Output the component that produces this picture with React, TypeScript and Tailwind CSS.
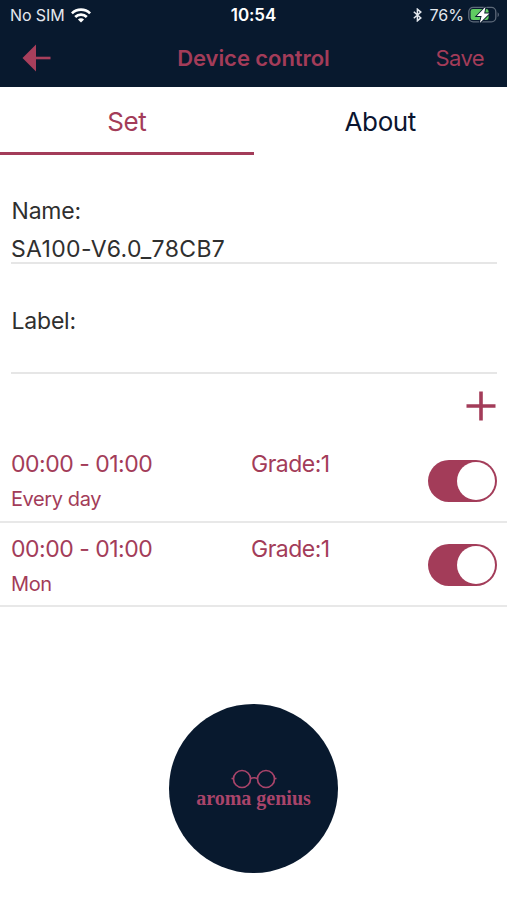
import React, { useState } from "react";

interface Timer {
    id: number;
    time: string;
    grade: number;
    days: string;
}

const timers: Timer[] = [
    { id: 1, time: "00:00 - 01:00", grade: 1, days: "Every day" },
    { id: 2, time: "00:00 - 01:00", grade: 1, days: "Mon" },
];

function WifiIcon() {
    return (
        <svg width="20" height="15" viewBox="0 0 20 15" fill="none" stroke="white" strokeWidth="2.7">
            <path d="M0.9 5.4a13 13 0 0 1 18.2 0" />
            <path d="M4.2 9a8.2 8.2 0 0 1 11.6 0" />
            <path d="M10 14.6 6.9 11.5a4.4 4.4 0 0 1 6.2 0z" fill="white" stroke="none" />
        </svg>
    );
}

function BluetoothIcon() {
    return (
        <svg width="9" height="14" viewBox="0 0 9 14" fill="none" stroke="#e4e8ee" strokeWidth="1.5">
            <path d="M0.8 3.8 7.8 9.9 4.4 12.8V1.2L7.8 4.1 0.8 10.2" />
        </svg>
    );
}

function BatteryIcon() {
    return (
        <svg width="33" height="18" viewBox="0 0 33 18">
            <rect x="0.8" y="1.3" width="27" height="14.6" rx="4.4" fill="none" stroke="#5d6979" strokeWidth="1.3" />
            <path d="M29.6 6.2c1.7.7 1.7 4.1 0 4.8z" fill="#5d6979" />
            <rect x="2.6" y="3.1" width="18" height="11" rx="2.4" fill="#5fcb61" />
            <path
                d="M17.5 0.8 8.8 10h4.8l-1.8 7 9.600-9.600h-5.200z"
                fill="white"
                stroke="#08192e"
                strokeWidth="1.8"
                paintOrder="stroke"
            />
        </svg>
    );
}

function Toggle() {
    const [on, setOn] = useState(true);
    return (
        <button
            onClick={() => setOn(!on)}
            className={`flex h-[42px] w-[69px] items-center rounded-full p-[2px] ${on ? "justify-end bg-[#a33c59]" : "justify-start bg-gray-300"}`}
        >
            <span className="size-[38px] rounded-full bg-white" />
        </button>
    );
}

function Field({ label, value }: { label: string; value: string }) {
    return (
        <div className="mr-[10px] ml-[11px] flex h-[110px] flex-col border-b-2 border-[#e6e6e6] text-[23px] leading-[37px] text-[#2f2f2f]">
            <label className="mt-[39px] pl-[0.5px] tracking-[-0.2px]">{label}</label>
            <span className="pt-px tracking-[0.35px]">{value}</span>
        </div>
    );
}

export default function App() {
    return (
        <div className="flex h-[900px] w-[507px] flex-col overflow-hidden bg-white font-['Inter',sans-serif] text-[#a33c59]">
            <header className="h-[87px] bg-[#08192e]">
                <div className="grid h-[30px] grid-cols-3 items-center text-white">
                    <div className="flex items-center gap-[6px] pl-[10px] text-[16px]">
                        <span className="tracking-[-0.1px] text-[#e4e8ee]">No SIM</span>
                        <WifiIcon />
                    </div>
                    <span className="pt-px text-center text-[17px] font-semibold tracking-[-0.1px]">10:54</span>
                    <div className="flex items-center justify-end pr-[6px] text-[16px] text-[#e4e8ee]">
                        <BluetoothIcon />
                        <span className="mr-[4px] ml-[8px]">76%</span>
                        <BatteryIcon />
                    </div>
                </div>
                <div className="grid h-[55px] grid-cols-[1fr_auto_1fr] items-center">
                    <svg className="ml-[22px]" width="29" height="28" viewBox="0 0 29 28" fill="#a83f5c">
                        <path d="M0.5 14 14 0.5v27z" />
                        <path d="M13 12.7h15.5v2.6H13z" />
                    </svg>
                    <h1 className="pt-px text-[22px] font-semibold tracking-[-0.05px]">Device control</h1>
                    <span className="pt-px pr-[23px] text-right text-[22px] tracking-[-0.6px]">Save</span>
                </div>
            </header>

            <nav className="-mb-px grid h-[68px] grid-cols-2 text-center text-[26px] leading-[70px] tracking-[-0.4px]">
                <div className="h-[68px] border-b-[3px] border-[#a33c59]">Set</div>
                <div className="h-[68px] text-[#0b1530]">About</div>
            </nav>

            <Field label="Name:" value="SA100-V6.0_78CB7" />
            <Field label="Label:" value="" />

            <div className="flex h-[64px] justify-end pt-[17px] pr-[11px]">
                <svg width="30" height="30" viewBox="0 0 30 30" stroke="#a33c59" strokeWidth="3.6">
                    <path d="M15 0.5v29M0.5 15h29" />
                </svg>
            </div>

            {timers.map((t) => (
                <div key={t.id} className="flex h-[84.5px] items-center border-b-2 border-[#e8e8e8] pt-[3px] pr-[10px] pl-[11px]">
                    <div className="flex w-[240px] flex-col pt-[2px]">
                        <span className="text-[23px] leading-[35px] tracking-[-0.5px]">{t.time}</span>
                        <span className="text-[20px] leading-[34px] tracking-[-0.4px]">{t.days}</span>
                    </div>
                    <span className="mb-[32px] flex-1 text-[23px] leading-[35px] tracking-[-0.5px]">Grade:{t.grade}</span>
                    <Toggle />
                </div>
            ))}

            <div className="mt-[97px] flex size-[169px] flex-col items-center self-center rounded-full bg-[#08192e] pt-[65px]">
                <svg width="46" height="20" viewBox="0 0 46 20" fill="none" stroke="#a9446a" strokeWidth="1.7">
                    <circle cx="11" cy="10" r="8.5" />
                    <circle cx="35" cy="10" r="8.5" />
                    <path d="M19.5 9.5q3.5-1.500 7 0M0.500 9.500h2M43.500 9.500h2" />
                </svg>
                <span className="-mt-px font-['Liberation_Serif',serif] text-[20px] leading-[20px] font-bold text-[#a9446a]">aroma genius</span>
            </div>
        </div>
    );
}
